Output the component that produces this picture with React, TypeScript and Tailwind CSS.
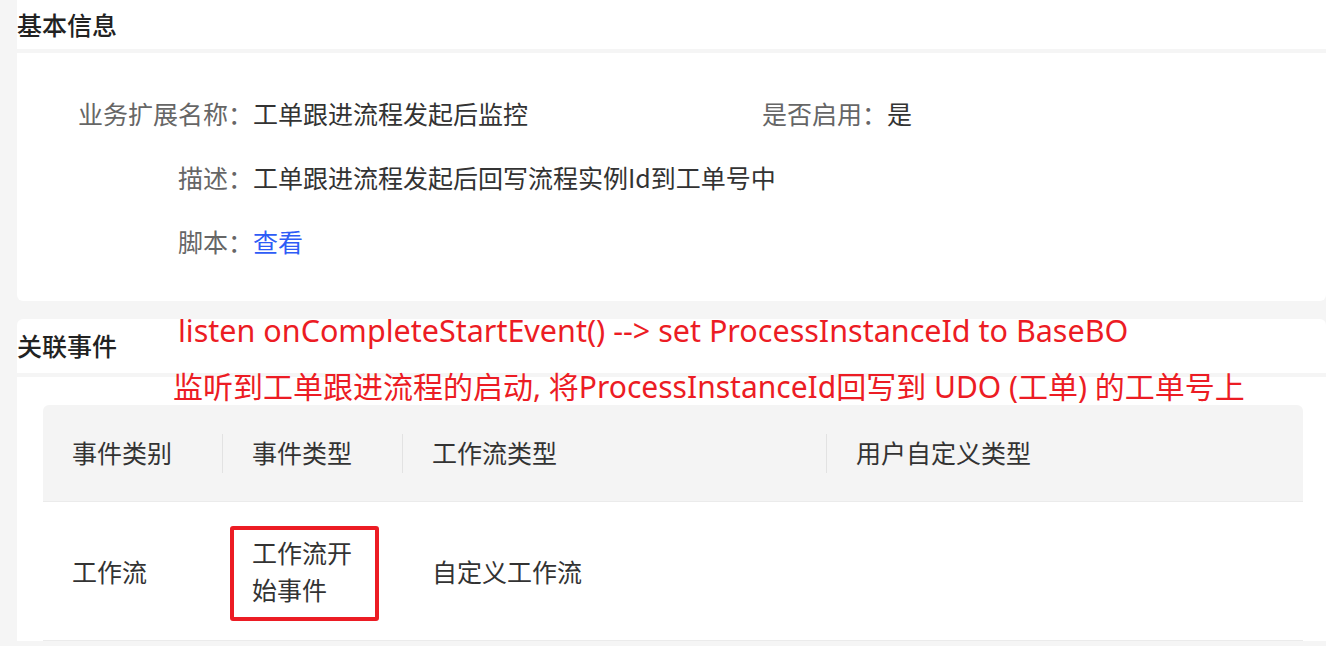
const cjk = { fontFamily: '"Noto Sans CJK SC", "Noto Sans", sans-serif' };
const note = { fontFamily: '"Noto Sans", "Noto Sans CJK SC", sans-serif' };

const columns = [
  { title: "事件类别", width: "w-[179px]" },
  { title: "事件类型", width: "w-[180px]" },
  { title: "工作流类型", width: "w-[424px]" },
  { title: "用户自定义类型", width: "flex-1" },
];

const App = () => {
  return (
    <main
      className="relative min-h-screen bg-[#f5f5f5] pl-[17px] text-[25px] text-[#333]"
      style={cjk}
    >
      {/* 基本信息 */}
      <div className="flex h-[49px] items-center bg-white font-medium text-[#222]">
        基本信息
      </div>
      <section className="mt-[4px] h-[248px] rounded-b-md bg-white pt-[28px] leading-none">
        <div className="flex h-16 items-center">
          <span className="w-[236px] text-right text-[#666]">业务扩展名称：</span>
          <span className="w-[509px]">工单跟进流程发起后监控</span>
          <span className="text-[#666]">是否启用：</span>
          <span>是</span>
        </div>
        <div className="flex h-16 items-center">
          <span className="w-[236px] text-right text-[#666]">描述：</span>
          <span>工单跟进流程发起后回写流程实例Id到工单号中</span>
        </div>
        <div className="flex h-16 items-center">
          <span className="w-[236px] text-right text-[#666]">脚本：</span>
          <a href="#" className="text-[#2e5cf6]">
            查看
          </a>
        </div>
      </section>

      {/* 关联事件 */}
      <div className="mt-[18px] flex h-[54px] items-center rounded-t-md bg-white font-medium text-[#222]">
        关联事件
      </div>
      <section className="mt-[4px] bg-white pl-[26px] pr-[23px] pt-[28px]">
        <div className="flex h-[97px] items-center rounded-t-md border-b border-[#ebebeb] bg-[#f4f4f4]">
          {columns.map((col, i) => (
            <div key={col.title} className={`${col.width} flex h-[39px] items-center`}>
              {i > 0 && <span className="h-full w-px bg-[#e2e2e2]" />}
              <span className="pl-[29px]">{col.title}</span>
            </div>
          ))}
        </div>
        <div className="flex h-[139px] items-center border-b border-[#ebebeb] leading-[37px]">
          <div className="w-[179px] pl-[29px]">工作流</div>
          <div className="relative flex h-full w-[180px] items-center px-[30px]">
            <span>工作流开始事件</span>
            <span className="absolute left-[8px] top-[24px] h-[95px] w-[149px] rounded-[3px] border-[4px] border-[#ec1c24]" />
          </div>
          <div className="w-[424px] pl-[30px]">自定义工作流</div>
          <div className="flex-1" />
        </div>
      </section>

      {/* annotations */}
      <p
        className="absolute left-[178px] top-[308px] text-[30.5px] leading-[44px] text-[#ec1c24]"
        style={note}
      >
        listen onCompleteStartEvent() --&gt; set ProcessInstanceId to BaseBO
      </p>
      <p
        className="absolute left-[173px] top-[365px] text-[30px] leading-[44px] text-[#ec1c24]"
        style={note}
      >
        监听到工单跟进流程的启动, 将ProcessInstanceId回写到 UDO (工单) 的工单号上
      </p>
    </main>
  );
};

export default App;
